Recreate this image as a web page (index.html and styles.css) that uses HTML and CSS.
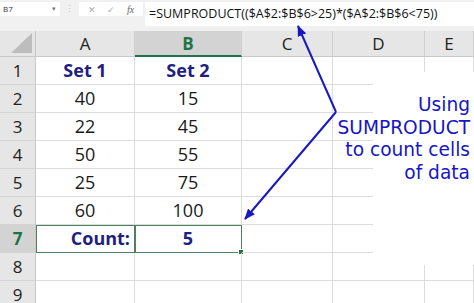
FILE: index.html
```html
<!DOCTYPE html>
<html lang="en">
<head>
    <meta charset="UTF-8">
    <title>SUMPRODUCT count</title>
    <link rel="stylesheet" href="styles.css">
</head>
<body>
    <div class="toolbar">
        <div class="name-box">B7<span class="caret">▾</span></div>
        <span class="dots">⋮</span>
        <div class="fx-box">
            <span class="fx-icon">✕</span>
            <span class="fx-icon">✓</span>
            <span class="fx-label">fx</span>
        </div>
        <div class="formula">=SUMPRODUCT(($A$2:$B$6&gt;25)*($A$2:$B$6&lt;75))</div>
    </div>

    <div class="sheet">
        <div class="corner"><span class="corner-tri"></span></div>
        <div class="col-head">A</div>
        <div class="col-head active">B</div>
        <div class="col-head">C</div>
        <div class="col-head">D</div>
        <div class="col-head">E</div>

        <div class="row-head">1</div>
        <div class="cell title">Set 1</div>
        <div class="cell title">Set 2</div>
        <div class="cell"></div><div class="cell"></div><div class="cell"></div>

        <div class="row-head">2</div>
        <div class="cell">40</div><div class="cell">15</div>
        <div class="cell"></div><div class="cell"></div><div class="cell"></div>

        <div class="row-head">3</div>
        <div class="cell">22</div><div class="cell">45</div>
        <div class="cell"></div><div class="cell"></div><div class="cell"></div>

        <div class="row-head">4</div>
        <div class="cell">50</div><div class="cell">55</div>
        <div class="cell"></div><div class="cell"></div><div class="cell"></div>

        <div class="row-head">5</div>
        <div class="cell">25</div><div class="cell">75</div>
        <div class="cell"></div><div class="cell"></div><div class="cell"></div>

        <div class="row-head">6</div>
        <div class="cell">60</div><div class="cell">100</div>
        <div class="cell"></div><div class="cell"></div><div class="cell"></div>

        <div class="row-head active">7</div>
        <div class="cell title sel right">Count:</div>
        <div class="cell title sel">5<span class="handle"></span></div>
        <div class="cell"></div><div class="cell"></div><div class="cell"></div>

        <div class="row-head">8</div>
        <div class="cell"></div><div class="cell"></div>
        <div class="cell"></div><div class="cell"></div><div class="cell"></div>

        <div class="row-head">9</div>
        <div class="cell"></div><div class="cell"></div>
        <div class="cell"></div><div class="cell"></div><div class="cell"></div>
    </div>

    <!-- caixa de texto sobre a grade -->
    <div class="note">Using<br>SUMPRODUCT<br>to count cells<br>of data</div>

    <svg class="arrow" width="474" height="303" viewBox="0 0 474 303">
        <defs>
            <marker id="head" markerWidth="11" markerHeight="9" refX="10" refY="4.5" orient="auto" markerUnits="userSpaceOnUse">
                <path d="M0,0 L11,4.5 L0,9 Z" fill="#1818c0"/>
            </marker>
        </defs>
        <line x1="336" y1="112" x2="298" y2="26" stroke="#1818c0" stroke-width="2" marker-end="url(#head)"/>
        <line x1="336" y1="112" x2="245" y2="219" stroke="#1818c0" stroke-width="2" marker-end="url(#head)"/>
    </svg>
</body>
</html>
```

FILE: styles.css
```css
html, body {
    margin: 0;
    padding: 0;
}
body {
    width: 474px;
    height: 303px;
    overflow: hidden;
    position: relative;
    background: #fff;
    font-family: 'Open Sans', sans-serif;
    color: #1a1a1a;
}

/* barra de fórmula */
.toolbar {
    height: 31px;
    background: #f1f1f1;
    display: flex;
    align-items: flex-start;
    padding-top: 2px;
    box-sizing: border-box;
}
.name-box {
    width: 60px;
    height: 14px;
    background: #fff;
    font-size: 8px;
    line-height: 14px;
    padding-left: 3px;
    box-sizing: border-box;
    color: #333;
    position: relative;
}
.caret {
    position: absolute;
    right: 4px;
    top: 0;
    font-size: 7px;
    color: #777;
}
.dots {
    width: 19px;
    text-align: center;
    font-size: 9px;
    line-height: 14px;
    color: #bbb;
}
.fx-box {
    width: 64px;
    height: 14px;
    background: #fff;
    display: flex;
    align-items: center;
    justify-content: space-around;
    padding: 0 3px;
    box-sizing: border-box;
}
.fx-icon {
    font-size: 9px;
    color: #aaa;
}
.fx-label {
    font-family: 'Liberation Serif', serif;
    font-style: italic;
    font-size: 10px;
    color: #666;
}
.formula {
    margin-left: 2px;
    flex: 1;
    height: 24px;
    background: #fff;
    font-size: 12.5px;
    line-height: 24px;
    padding-left: 4px;
    white-space: nowrap;
    color: #111;
}

/* grade */
.sheet {
    display: grid;
    grid-template-columns: 36px 99px 107px 91px 92px 49px;
    grid-template-rows: 26px repeat(9, 28px);
}
.corner {
    background: #e6e6e6;
    border-right: 1px solid #c9c9c9;
    border-bottom: 1px solid #c9c9c9;
    position: relative;
}
.corner-tri {
    position: absolute;
    right: 3px;
    bottom: 3px;
    width: 0;
    height: 0;
    border-left: 21px solid transparent;
    border-bottom: 20px solid #bdbdbd;
}
.col-head {
    background: #e6e6e6;
    border-right: 1px solid #cfcfcf;
    border-bottom: 1px solid #c9c9c9;
    text-align: center;
    font-size: 17px;
    line-height: 26px;
    color: #222;
}
.col-head.active {
    background: #d3d3d3;
    color: #217346;
    font-weight: bold;
    border-bottom: 2px solid #217346;
    line-height: 25px;
}
.row-head {
    background: #e6e6e6;
    border-right: 1px solid #c9c9c9;
    border-bottom: 1px solid #d4d4d4;
    text-align: center;
    font-size: 17px;
    line-height: 27px;
    color: #222;
}
.row-head.active {
    background: #d3d3d3;
    color: #217346;
    font-weight: bold;
}
.cell {
    border-right: 1px solid #dcdcdc;
    border-bottom: 1px solid #dcdcdc;
    text-align: center;
    font-size: 18px;
    line-height: 27px;
    position: relative;
}
.cell.title {
    color: #1f1f80;
    font-weight: bold;
}
.cell.right {
    text-align: right;
    padding-right: 4px;
}
.cell.sel {
    outline: 1px solid #4f7f5f;
    outline-offset: -1px;
}
.handle {
    position: absolute;
    right: -3px;
    bottom: -3px;
    width: 4px;
    height: 4px;
    background: #217346;
    border: 1px solid #fff;
}

/* caixa de texto */
.note {
    position: absolute;
    z-index: 1;
    left: 334px;
    top: 94px;
    width: 136px;
    text-align: right;
    font-family: 'DejaVu Sans', sans-serif;
    font-size: 18.6px;
    line-height: 22.5px;
    color: #1616c4;
}
.note::before {
    content: "";
    position: absolute;
    z-index: -1;
    left: 39px;
    top: -22px;
    right: -4px;
    height: 193px;
    background: #fff;
}
.arrow {
    position: absolute;
    z-index: 2;
    left: 0;
    top: 0;
    pointer-events: none;
}
```
